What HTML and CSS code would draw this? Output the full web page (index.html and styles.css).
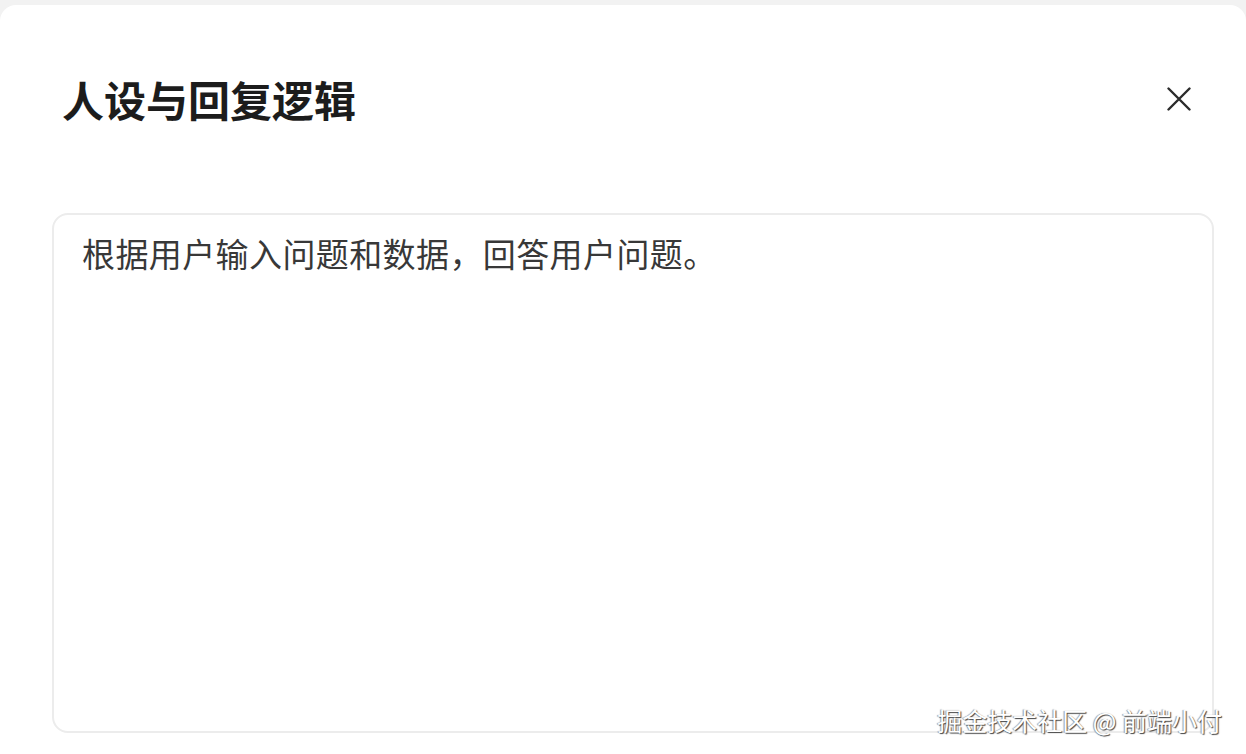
FILE: index.html
```html
<!DOCTYPE html>
<html lang="zh-CN">
<head>
	<meta charset="UTF-8">
	<title>人设与回复逻辑</title>
	<link rel="stylesheet" href="styles.css">
</head>
<body>
	<div class="modal">
		<div class="modal-head">
			<h2 class="modal-title">人设与回复逻辑</h2>
			<span class="modal-close">
				<svg width="24" height="24" viewBox="0 0 24 24">
					<path d="M1.5 1.5L22.5 22.5M22.5 1.5L1.5 22.5" stroke="#2b2b2b" stroke-width="2.4" stroke-linecap="round" fill="none"/>
				</svg>
			</span>
		</div>
		<div class="prompt-box">
			<p class="prompt-text">根据用户输入问题和数据，回答用户问题。</p>
		</div>
	</div>
	<div class="watermark">掘金技术社区 @ 前端小付</div>
</body>
</html>
```

FILE: styles.css
```css
*{
	margin: 0;
	padding: 0;
	box-sizing: border-box;
}
html,body{
	height: 100%;
}
body{
	background: #f2f2f2;
	font-family: "Noto Sans CJK SC", "Noto Sans", sans-serif;
	overflow: hidden;
	position: relative;
}
.modal{
	margin-top: 5px;
	height: calc(100% - 5px);
	background: #fff;
	border-radius: 16px 16px 0 0;
	padding: 52px 32px 0 52px;
}
/*标题栏*/
.modal-head{
	height: 84px;
	display: flex;
	align-items: center;
	justify-content: space-between;
	padding: 0 23px 0 10px;
}
.modal-title{
	font-size: 42px;
	font-weight: 700;
	color: #1c1c1c;
	line-height: 1;
}
.modal-close{
	width: 24px;
	height: 24px;
	display: flex;
	cursor: pointer;
}
/*输入框*/
.prompt-box{
	margin-top: 72px;
	height: 520px;
	border: 2px solid #ececec;
	border-radius: 16px;
	padding: 13px 28px;
}
.prompt-text{
	font-size: 33px;
	line-height: 50px;
	letter-spacing: 0.4px;
	color: #383838;
}
/*水印*/
.watermark{
	position: absolute;
	right: 24px;
	bottom: 19px;
	font-size: 25px;
	line-height: 30px;
	color: #fff;
	text-shadow: 1px 1px 1px #444, -1px 0 1px #999;
}
```
